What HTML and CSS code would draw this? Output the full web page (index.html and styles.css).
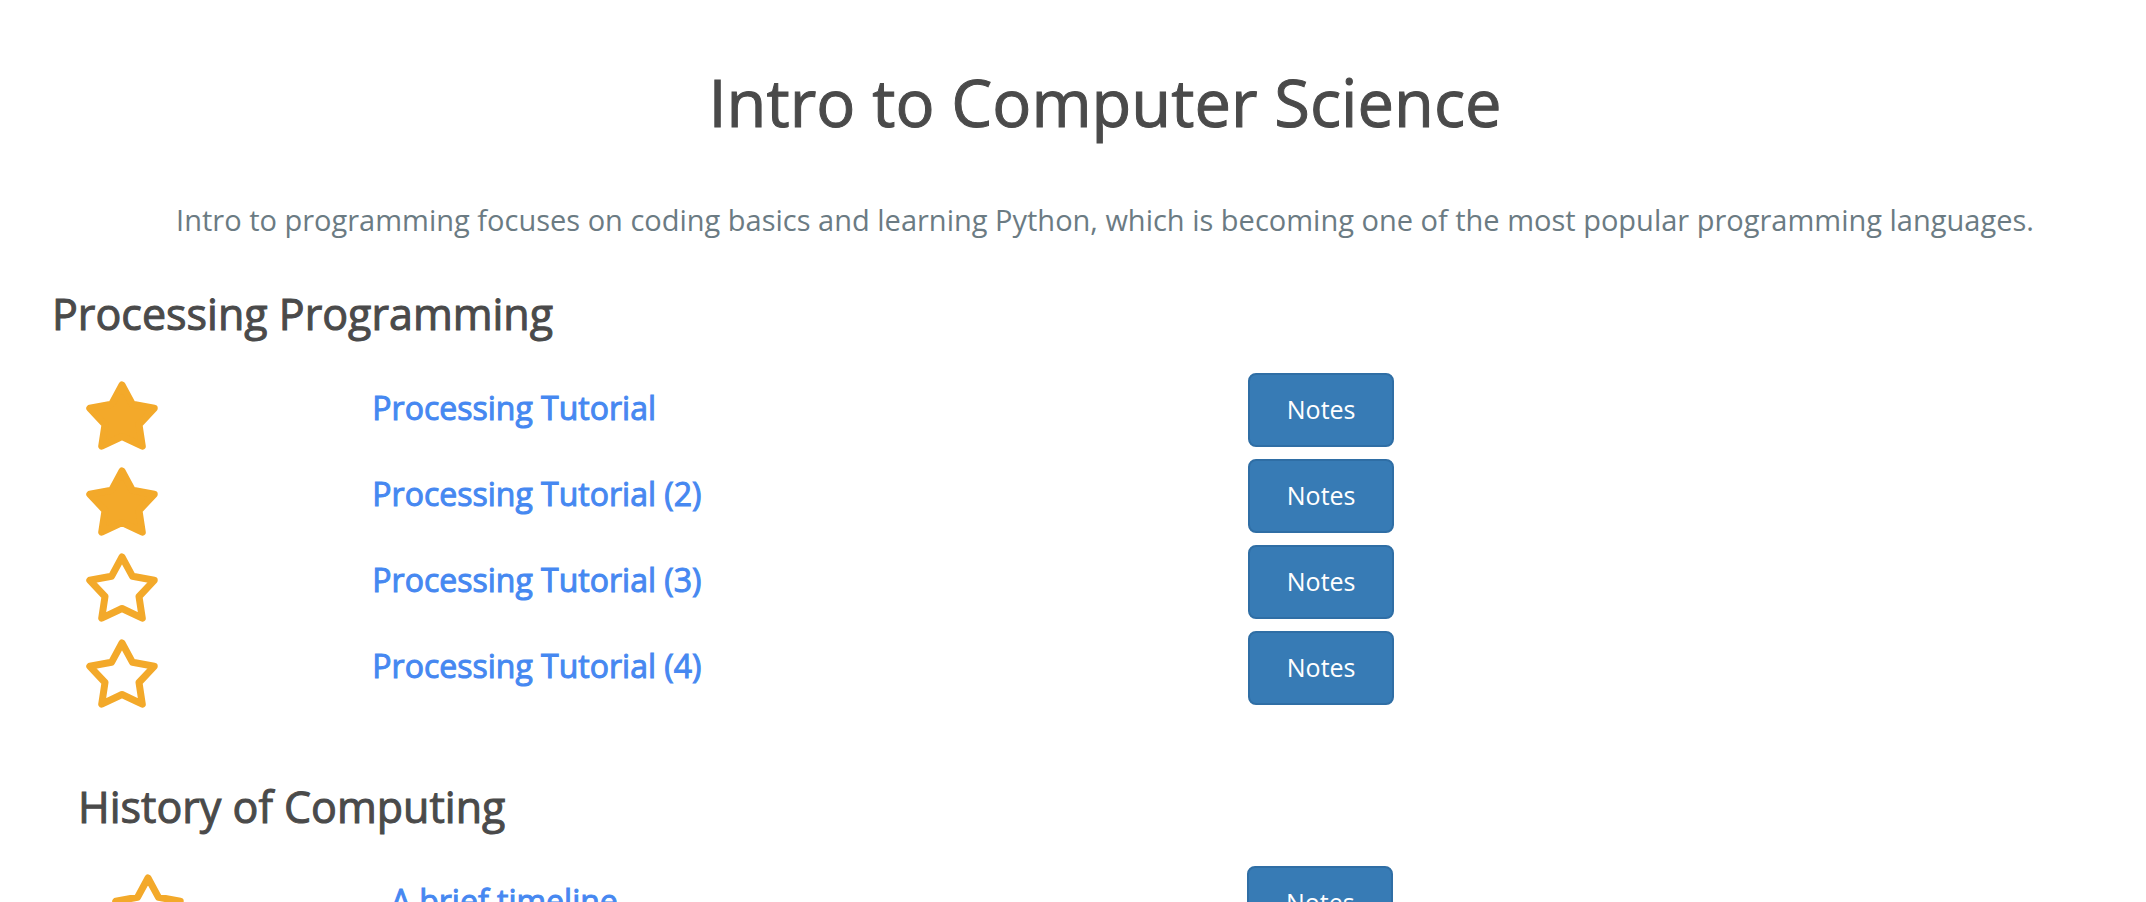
FILE: index.html
```html
<!DOCTYPE html>
<html lang="en">
<head>
<meta charset="utf-8">
<title>Intro to Computer Science</title>
<link rel="stylesheet" href="styles.css">
</head>
<body>
<svg class="defs" aria-hidden="true">
<symbol id="star" viewBox="0 0 72 70"><path d="M36 4 L46.500 23.300 L68.200 27.300 L53 43.500 L56.300 65.200 L36 55.500 L15.700 65.200 L19 43.500 L3.800 27.300 L25.500 23.300 Z" stroke-width="7" stroke-linejoin="round"/></symbol>
</svg>
<main class="page">
<h1 class="title">Intro to Computer Science</h1>
<p class="intro">Intro to programming focuses on coding basics and learning Python, which is becoming one of the most popular programming languages.</p>
<section class="unit">
<h2 class="heading">Processing Programming</h2>
<ul class="lessons">
<li class="lesson"><svg class="star filled" role="img" aria-label="Done"><use href="#star"/></svg><a class="link" href="#l1">Processing Tutorial</a><button class="notes" type="button">Notes</button></li>
<li class="lesson"><svg class="star filled" role="img" aria-label="Done"><use href="#star"/></svg><a class="link" href="#l2">Processing Tutorial (2)</a><button class="notes" type="button">Notes</button></li>
<li class="lesson"><svg class="star" role="img" aria-label="Not done"><use href="#star"/></svg><a class="link" href="#l3">Processing Tutorial (3)</a><button class="notes" type="button">Notes</button></li>
<li class="lesson"><svg class="star" role="img" aria-label="Not done"><use href="#star"/></svg><a class="link" href="#l4">Processing Tutorial (4)</a><button class="notes" type="button">Notes</button></li>
</ul>
</section>
<section class="unit history">
<h2 class="heading">History of Computing</h2>
<ul class="lessons">
<li class="lesson"><svg class="star" role="img" aria-label="Not done"><use href="#star"/></svg><a class="link" href="#h1">A brief timeline</a><button class="notes" type="button">Notes</button></li>
</ul>
</section>
</main>
</body>
</html>
```
FILE: styles.css
```css
body { margin: 0; background: #fff; color: #4a4a4a; font-family: "Open Sans", sans-serif; }
.defs { position: absolute; width: 0; height: 0; }
.page { height: 100vh; overflow: hidden; box-sizing: border-box; padding: 62px 22px 0; }
.title { margin: 0; padding-left: 64px; text-align: center; font-size: 65px; line-height: 80px; font-weight: 400; -webkit-text-stroke: 1px; }
.intro { margin: 56px 0 0; padding-left: 64px; text-align: center; font-size: 29px; line-height: 44px; color: #6b7b83; }
.heading { margin: 0 0 0 30px; font-size: 43px; line-height: 60px; font-weight: 400; -webkit-text-stroke: 1px; }
.unit { padding-top: 42px; }
.lessons { list-style: none; margin: 0; padding: 29px 0 0; }
.lesson { display: grid; grid-template-columns: 2fr 5fr 5fr; height: 86px; align-items: start; }
.star { width: 72px; height: 70px; margin: 8px 0 0 64px; fill: none; stroke: #f3a92a; }
.filled { fill: #f3a92a; }
.link { margin-top: 12px; font-size: 32px; line-height: 46px; color: #4688f1; text-decoration: none; -webkit-text-stroke: 1px; }
.notes { width: 146px; height: 74px; padding: 0 0 2px; border: 2px solid #2f6ea5; border-radius: 8px; background: #377bb5; color: #fff; font: 25px "Open Sans", sans-serif; }
.history { padding: 60px 20px 0 26px; }
```
